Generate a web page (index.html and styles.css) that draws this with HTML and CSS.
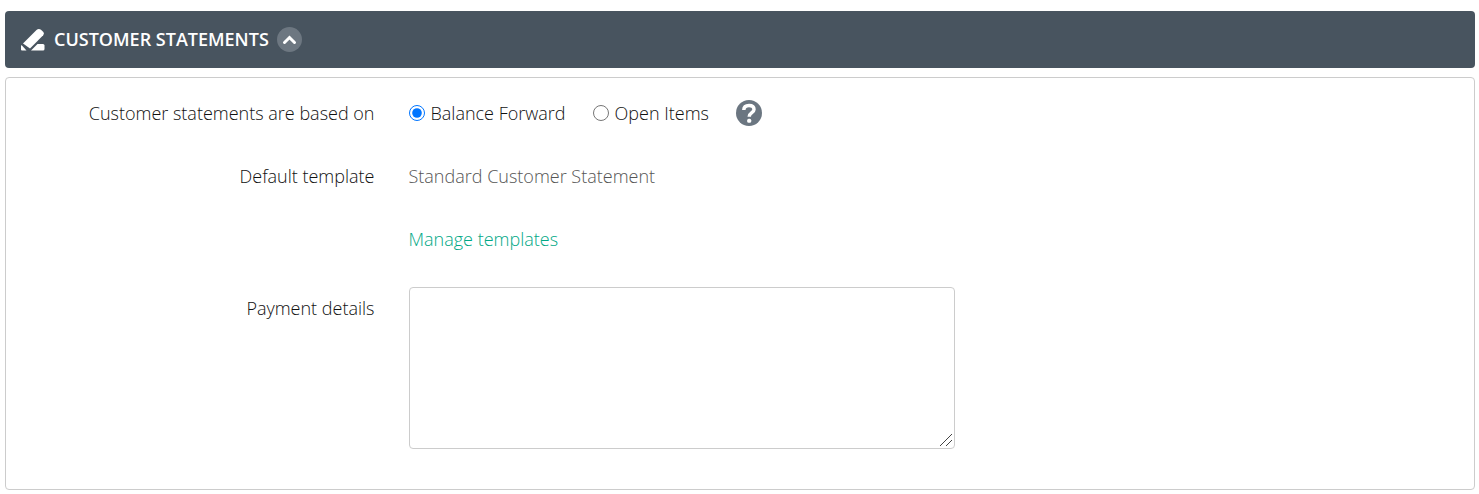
FILE: index.html
```html
<!DOCTYPE html>
<html lang="en">
<head>
    <meta charset="UTF-8">
    <meta name="viewport" content="width=device-width, initial-scale=1.0">
    <title>Customer Statements</title>
    <link rel="stylesheet" href="styles.css">
</head>
<body>
    <div class="section-header">
        <svg class="edit-icon" viewBox="0 0 24 24" aria-hidden="true">
            <path d="M2 15.500 15.500 2Q17.800 0 20 1.800L22.400 4Q23.600 5.600 22.200 7.200L9 20.400Z"/>
            <path d="M0.500 17 5.500 22.500H1Q0 22.500 0 21.500V18Z"/>
            <path d="M16.500 16H22Q23.500 16 23.500 17.500V21Q23.500 22.500 22 22.500H10Z"/>
        </svg>
        <h2>CUSTOMER STATEMENTS</h2>
        <button type="button" class="toggle-button" aria-label="Collapse section">
            <svg viewBox="0 0 25 25" aria-hidden="true">
                <path d="M7.500 15.500 12.500 10.500 17.500 15.500"/>
            </svg>
        </button>
    </div>

    <form class="section-body">
        <div class="form-row">
            <span class="form-label" id="basisLabel">Customer statements are based on</span>
            <div class="form-field options" role="radiogroup" aria-labelledby="basisLabel">
                <label class="radio-label"><input type="radio" name="basis" value="balance" checked>Balance Forward</label>
                <label class="radio-label"><input type="radio" name="basis" value="open">Open Items</label>
                <button type="button" class="help-button" aria-label="Help">
                    <svg viewBox="0 0 26 26" aria-hidden="true">
                        <circle cx="13" cy="13" r="13"/>
                        <path d="M7.800 10C7.900 7 10 5.500 13 5.500S18 7 18 9.600C18 12.800 13.200 12.600 13.200 16.800"/>
                        <rect x="11.200" y="18.800" width="4" height="4" rx="1.500"/>
                    </svg>
                </button>
            </div>
        </div>
        <div class="form-row">
            <span class="form-label">Default template</span>
            <div class="form-field template-name">Standard Customer Statement</div>
        </div>
        <div class="form-row">
            <div class="form-field offset"><a href="#">Manage templates</a></div>
        </div>
        <div class="form-row">
            <label class="form-label textarea-label" for="paymentDetails">Payment details</label>
            <div class="form-field">
                <textarea class="form-control" id="paymentDetails"></textarea>
            </div>
        </div>
    </form>
</body>
</html>
```
FILE: styles.css
```css
* {
    box-sizing: border-box;
}
body {
    font-family: "Open Sans", "Noto Sans", sans-serif;
    font-size: 18px;
    font-weight: 300;
    line-height: 28px;
    color: #111;
    background-color: #fff;
    margin: 0;
    padding: 11px 4px 4px 5px;
}
button {
    padding: 0;
    border: none;
    background: none;
    cursor: pointer;
}
button svg {
    display: block;
}
.section-header {
    display: flex;
    align-items: center;
    min-height: 57px;
    padding: 0 16px;
    border-radius: 4px;
    background-color: #48545f;
    color: #fff;
}
.section-header h2 {
    margin: 0 8px 0 9px;
    padding-bottom: 2px;
    font-size: 18px;
    font-weight: 600;
}
.edit-icon {
    width: 24px;
    height: 24px;
    fill: #fff;
}
.toggle-button {
    width: 25px;
    height: 25px;
    border-radius: 50%;
    background-color: #6d7781;
}
.toggle-button path {
    fill: none;
    stroke: #fff;
    stroke-width: 3;
    stroke-linecap: round;
}
.section-body {
    display: grid;
    row-gap: 35px;
    margin-top: 9px;
    padding: 21px 3px 40px;
    border: 1px solid #ccc;
    border-radius: 4px;
}
.form-row {
    display: grid;
    grid-template-columns: 25% 1fr;
    column-gap: 34px;
}
.form-row:last-child {
    margin-top: -1px;
}
.form-label {
    text-align: right;
}
.textarea-label {
    padding-top: 7px;
}
.offset {
    grid-column: 2;
}
.options {
    display: flex;
    align-items: center;
    gap: 27px;
}
.radio-label {
    display: flex;
    align-items: center;
}
.radio-label input {
    width: 16px;
    height: 16px;
    margin: 0 6px 0 0;
    accent-color: #0075ff;
}
.help-button {
    width: 26px;
    height: 26px;
}
.help-button circle {
    fill: #6b7681;
}
.help-button path {
    fill: none;
    stroke: #fff;
    stroke-width: 3.5;
}
.help-button rect {
    fill: #fff;
}
.template-name {
    color: #555;
}
a {
    color: #00a886;
    text-decoration: none;
}
.form-control {
    display: block;
    width: 100%;
    max-width: 546px;
    height: 162px;
    padding: 6px 12px;
    border: 1px solid #ccc;
    border-radius: 4px;
    font: inherit;
    resize: both;
}
.form-control::-webkit-resizer {
    background: url("data:image/svg+xml,%3Csvg xmlns='http://www.w3.org/2000/svg' viewBox='0 0 15 15'%3E%3Cpath d='M1 13 13 1M7 13 13 7' stroke='%23444'/%3E%3C/svg%3E") no-repeat center / 15px 15px;
}
```
